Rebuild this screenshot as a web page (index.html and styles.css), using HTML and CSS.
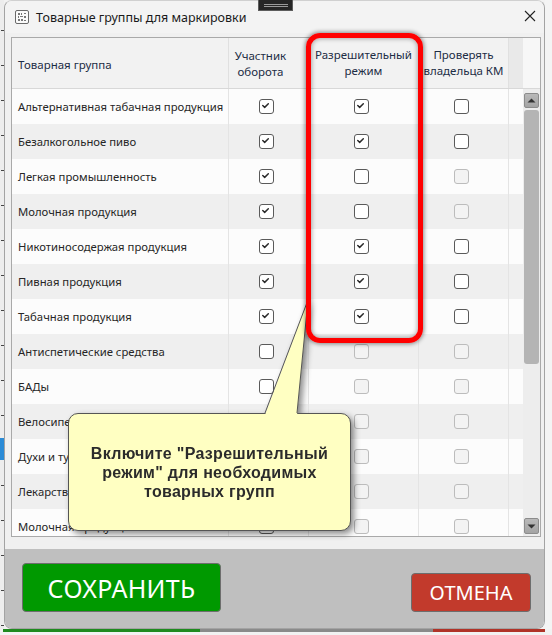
FILE: index.html
```html
<!DOCTYPE html>
<html lang="ru">
<head>
<meta charset="utf-8">
<title>Товарные группы для маркировки</title>
<link rel="stylesheet" href="styles.css">
</head>
<body>
<div class="screen">
  <div class="desk-left"></div>
  <div class="window">
    <div class="titlebar">
      <svg class="app-icon" width="14" height="14" viewBox="0 0 14 14">
        <rect x="0.5" y="0.5" width="13" height="13" rx="1.5" fill="#fafafa" stroke="#6a6a6a"/>
        <g fill="#777">
          <rect x="3" y="3" width="2" height="2"/><rect x="6" y="3" width="1" height="2"/><rect x="9" y="3" width="2" height="1"/>
          <rect x="3" y="6" width="1" height="2"/><rect x="5" y="6" width="3" height="1"/><rect x="9" y="6" width="2" height="2"/>
          <rect x="3" y="9" width="2" height="2"/><rect x="6" y="9" width="2" height="2"/><rect x="9" y="10" width="2" height="1"/>
        </g>
      </svg>
      <span class="title">Товарные группы для маркировки</span>
      <svg class="close" width="12" height="12" viewBox="0 0 12 12">
        <path d="M1 1 L11 11 M11 1 L1 11" stroke="#222" stroke-width="1.1" fill="none"/>
      </svg>
    </div>
    <div class="content">
      <div class="table">
        <div class="thead">
          <div class="th th-name">Товарная группа</div>
          <div class="th th-c2">Участник<br>оборота</div>
          <div class="th">Разрешительный<br>режим</div>
          <div class="th">Проверять<br>владельца КМ</div>
          <div class="th th-fill"></div>
          <div class="th-corner"></div>
        </div>
        <div class="tbody">
          <div class="rows">
            <div class="row"><div class="cell name">Альтернативная табачная продукция</div><div class="cell"><span class="cb on"><svg viewBox="0 0 15 15"><path d="M4.2 7.4 L6.4 9.5 L10.6 5.4"/></svg></span></div><div class="cell"><span class="cb on"><svg viewBox="0 0 15 15"><path d="M4.2 7.4 L6.4 9.5 L10.6 5.4"/></svg></span></div><div class="cell"><span class="cb"></span></div><div class="cell fill"></div></div>
            <div class="row"><div class="cell name">Безалкогольное пиво</div><div class="cell"><span class="cb on"><svg viewBox="0 0 15 15"><path d="M4.2 7.4 L6.4 9.5 L10.6 5.4"/></svg></span></div><div class="cell"><span class="cb on"><svg viewBox="0 0 15 15"><path d="M4.2 7.4 L6.4 9.5 L10.6 5.4"/></svg></span></div><div class="cell"><span class="cb"></span></div><div class="cell fill"></div></div>
            <div class="row"><div class="cell name">Легкая промышленность</div><div class="cell"><span class="cb on"><svg viewBox="0 0 15 15"><path d="M4.2 7.4 L6.4 9.5 L10.6 5.4"/></svg></span></div><div class="cell"><span class="cb"></span></div><div class="cell"><span class="cb dis"></span></div><div class="cell fill"></div></div>
            <div class="row"><div class="cell name">Молочная продукция</div><div class="cell"><span class="cb on"><svg viewBox="0 0 15 15"><path d="M4.2 7.4 L6.4 9.5 L10.6 5.4"/></svg></span></div><div class="cell"><span class="cb"></span></div><div class="cell"><span class="cb dis"></span></div><div class="cell fill"></div></div>
            <div class="row"><div class="cell name">Никотиносодержая продукция</div><div class="cell"><span class="cb on"><svg viewBox="0 0 15 15"><path d="M4.2 7.4 L6.4 9.5 L10.6 5.4"/></svg></span></div><div class="cell"><span class="cb on"><svg viewBox="0 0 15 15"><path d="M4.2 7.4 L6.4 9.5 L10.6 5.4"/></svg></span></div><div class="cell"><span class="cb"></span></div><div class="cell fill"></div></div>
            <div class="row"><div class="cell name">Пивная продукция</div><div class="cell"><span class="cb on"><svg viewBox="0 0 15 15"><path d="M4.2 7.4 L6.4 9.5 L10.6 5.4"/></svg></span></div><div class="cell"><span class="cb on"><svg viewBox="0 0 15 15"><path d="M4.2 7.4 L6.4 9.5 L10.6 5.4"/></svg></span></div><div class="cell"><span class="cb"></span></div><div class="cell fill"></div></div>
            <div class="row"><div class="cell name">Табачная продукция</div><div class="cell"><span class="cb on"><svg viewBox="0 0 15 15"><path d="M4.2 7.4 L6.4 9.5 L10.6 5.4"/></svg></span></div><div class="cell"><span class="cb on"><svg viewBox="0 0 15 15"><path d="M4.2 7.4 L6.4 9.5 L10.6 5.4"/></svg></span></div><div class="cell"><span class="cb"></span></div><div class="cell fill"></div></div>
            <div class="row"><div class="cell name">Антиспетические средства</div><div class="cell"><span class="cb"></span></div><div class="cell"><span class="cb dis"></span></div><div class="cell"><span class="cb dis"></span></div><div class="cell fill"></div></div>
            <div class="row"><div class="cell name">БАДы</div><div class="cell"><span class="cb"></span></div><div class="cell"><span class="cb dis"></span></div><div class="cell"><span class="cb dis"></span></div><div class="cell fill"></div></div>
            <div class="row"><div class="cell name">Велосипеды</div><div class="cell"><span class="cb"></span></div><div class="cell"><span class="cb dis"></span></div><div class="cell"><span class="cb dis"></span></div><div class="cell fill"></div></div>
            <div class="row"><div class="cell name">Духи и туалетная вода</div><div class="cell"><span class="cb"></span></div><div class="cell"><span class="cb dis"></span></div><div class="cell"><span class="cb dis"></span></div><div class="cell fill"></div></div>
            <div class="row"><div class="cell name">Лекарственные препараты</div><div class="cell"><span class="cb"></span></div><div class="cell"><span class="cb dis"></span></div><div class="cell"><span class="cb dis"></span></div><div class="cell fill"></div></div>
            <div class="row"><div class="cell name">Молочная продукция</div><div class="cell"><span class="cb"></span></div><div class="cell"><span class="cb dis"></span></div><div class="cell"><span class="cb dis"></span></div><div class="cell fill"></div></div>
          </div>
          <div class="vscroll">
            <div class="sb-btn"><svg width="9" height="5" viewBox="0 0 9 5"><path d="M0.5 4.5 L4.5 0.5 L8.5 4.5 Z" fill="#333"/></svg></div>
            <div class="sb-thumb"></div>
            <div class="sb-track"></div>
            <div class="sb-btn sb-down"><svg width="9" height="5" viewBox="0 0 9 5"><path d="M0.5 0.5 L4.5 4.5 L8.5 0.5 Z" fill="#333"/></svg></div>
          </div>
        </div>
      </div>
    </div>
    <div class="buttonbar">
      <button class="btn btn-save">СОХРАНИТЬ</button>
      <button class="btn btn-cancel">ОТМЕНА</button>
    </div>
  </div>
  <div class="desk-right"></div>
</div>
<div class="desk-bottom"><span class="db-green"></span><span class="db-grey"></span><span class="db-red"></span></div>

<div class="snap-handle"><span></span><span></span></div>
<div class="callout">
  <div class="callout-box">Включите "Разрешительный<br>режим" для необходимых<br>товарных групп</div>
  <svg class="callout-tail" width="50" height="118" viewBox="0 0 50 118">
    <path d="M1 116 L44 1 L33 116 Z" fill="#ffffc2"/>
    <path d="M1 114 L44 1 L33 114" fill="none" stroke="#555" stroke-width="1"/>
  </svg>
</div>
<div class="highlight"></div>
</body>
</html>
```
FILE: styles.css
```css
* { box-sizing: border-box; margin: 0; padding: 0; }
html, body { width: 552px; height: 635px; overflow: hidden; }
body {
  background: #f2f2f2;
  font-family: "Noto Sans", "Open Sans", sans-serif;
  position: relative;
}

.screen { display: flex; height: 629px; }
.desk-left {
  width: 4px;
  background:
    linear-gradient(#2b8bd6, #2b8bd6) 0 438px / 4px 22px no-repeat,
    repeating-linear-gradient(to bottom, transparent 0 30px, #444 30px 31px, transparent 31px 35px) 1px 0 / 3px 100% no-repeat,
    #ededed;
}
.desk-right { flex: 1; background: #f4f4f4; }
.desk-bottom { display: flex; height: 3px; margin-left: 3px; }
.db-green { width: 197px; background: #1f8a1f; }
.db-grey { width: 233px; background: #8a8a8a; }
.db-red { width: 112px; background: #b03328; }

.window {
  width: 541px;
  display: flex;
  flex-direction: column;
  background: #f0f0f0;
  border: 1px solid #a3a3a3;
  border-top-color: #d0d0d0;
  border-radius: 8px;
  overflow: hidden;
}

.titlebar {
  height: 32px;
  flex: none;
  display: flex;
  align-items: center;
  padding-left: 10px;
  padding-right: 8px;
  background: #f3f3f3;
}
.app-icon { flex: none; margin-top: -1px; }
.title {
  margin-left: 7px;
  font-size: 12.5px;
  color: #1a1a1a;
  flex: 1;
}
.close { flex: none; margin-top: -2px; }

.content { padding: 4px 3px 0 6px; flex: none; }
.table {
  height: 500px;
  border: 1px solid #a9a9a9;
  background: #fcfcfc;
  display: flex;
  flex-direction: column;
}
.thead {
  display: grid;
  grid-template-columns: 217px 80px 110px 90px 14px 17px;
  height: 51px;
  flex: none;
  background: #f2f2f2;
  border-bottom: 1px solid #d8d8d8;
}
.th {
  display: flex;
  align-items: center;
  justify-content: center;
  text-align: center;
  font-size: 11.5px;
  line-height: 16px;
  color: #1d2d45;
  border-right: 1px solid #e0e0e0;
  white-space: nowrap;
}
.th-name { justify-content: flex-start; padding-left: 6px; padding-top: 4px; }
.th-c2 { padding-right: 16px; padding-top: 2px; }
.th-fill { background: #e9e9e9; border-right: none; }
.th-corner { background: #f7f7f7; }

.tbody { flex: 1; display: flex; min-height: 0; }
.rows { width: 511px; overflow: hidden; }
.row {
  display: grid;
  grid-template-columns: 217px 80px 110px 90px 14px;
  height: 35px;
  background: #fcfcfc;
}
.row:nth-child(even) { background: #efefef; }
.cell {
  display: flex;
  align-items: center;
  justify-content: center;
  padding-right: 5px;
  border-right: 1px solid #e4e4e4;
}
.cell.name {
  justify-content: flex-start;
  padding-left: 6px;
  padding-right: 0;
  font-size: 11.3px;
  color: #262626;
  white-space: nowrap;
  overflow: hidden;
}
.cell.fill { border-right: none; }

.cb {
  width: 15px;
  height: 15px;
  border: 1px solid #5a5a5a;
  border-radius: 3px;
  background: #fff;
  display: block;
}
.cb svg { display: block; width: 13px; height: 13px; margin: 0; }
.cb svg path { fill: none; stroke: #2a2a2a; stroke-width: 1.7; stroke-linecap: round; stroke-linejoin: round; transform: translate(-1px, -1px); }
.cb.dis { border-color: #bcbcbc; background: #f3f3f3; }

.vscroll {
  width: 17px;
  flex: none;
  display: flex;
  flex-direction: column;
  padding: 4px 1px 2px 1px;
  background: #ededed;
}
.sb-btn {
  height: 15px;
  flex: none;
  background: linear-gradient(#b9b9b9, #a4a4a4);
  border: 1px solid #8c8c8c;
  border-radius: 2px;
  display: flex;
  align-items: center;
  justify-content: center;
}
.sb-down { height: 16px; }
.sb-thumb {
  height: 254px;
  flex: none;
  margin-top: 2px;
  background: #b4b4b4;
  border-radius: 3px;
}
.sb-track { flex: 1; }

.content + .buttonbar { margin-top: 12px; }
.buttonbar {
  flex: 1;
  background: #bfbfbf;
  display: flex;
  align-items: flex-end;
  justify-content: space-between;
  padding: 0 13px 16px 17px;
}
.btn {
  font-family: "Noto Sans", "Open Sans", sans-serif;
  color: #fff;
  border: 1px solid #6d6d6d;
  border-radius: 4px;
  cursor: pointer;
}
.btn-save {
  width: 199px;
  height: 49px;
  background: #009900;
  font-size: 25px;
  letter-spacing: 0.3px;
}
.btn-cancel {
  width: 120px;
  height: 39px;
  background: #c23a2c;
  font-size: 20px;
}

.snap-handle {
  position: absolute;
  left: 258px;
  top: 0;
  width: 35px;
  height: 11px;
  background: #262626;
  border: 1px solid #5c5c5c;
  border-top: none;
  display: flex;
  flex-direction: column;
  align-items: center;
  justify-content: center;
  gap: 1px;
}
.snap-handle span { width: 24px; height: 1px; background: #9a9a9a; }

.highlight {
  position: absolute;
  left: 306px;
  top: 33px;
  width: 117px;
  height: 310px;
  border: 5px solid #ff0000;
  border-radius: 14px;
  box-shadow: 0 0 4px 1px rgba(0, 0, 0, 0.45), inset 0 0 4px 1px rgba(0, 0, 0, 0.3);
}

.callout {
  position: absolute;
  left: 0;
  top: 0;
  width: 552px;
  height: 635px;
  pointer-events: none;
  filter: drop-shadow(3px 3px 3px rgba(0, 0, 0, 0.45));
}
.callout-box {
  position: absolute;
  left: 68px;
  top: 413px;
  width: 283px;
  height: 118px;
  background: #ffffc2;
  border: 1px solid #555;
  border-radius: 10px;
  display: flex;
  align-items: center;
  justify-content: center;
  text-align: center;
  font-family: "Liberation Sans", Arial, sans-serif;
  font-weight: bold;
  font-size: 16px;
  line-height: 19px;
  letter-spacing: 0.3px;
  color: #2b2b2b;
  padding-top: 1px;
}
.callout-tail {
  position: absolute;
  left: 264px;
  top: 299px;
}
```
